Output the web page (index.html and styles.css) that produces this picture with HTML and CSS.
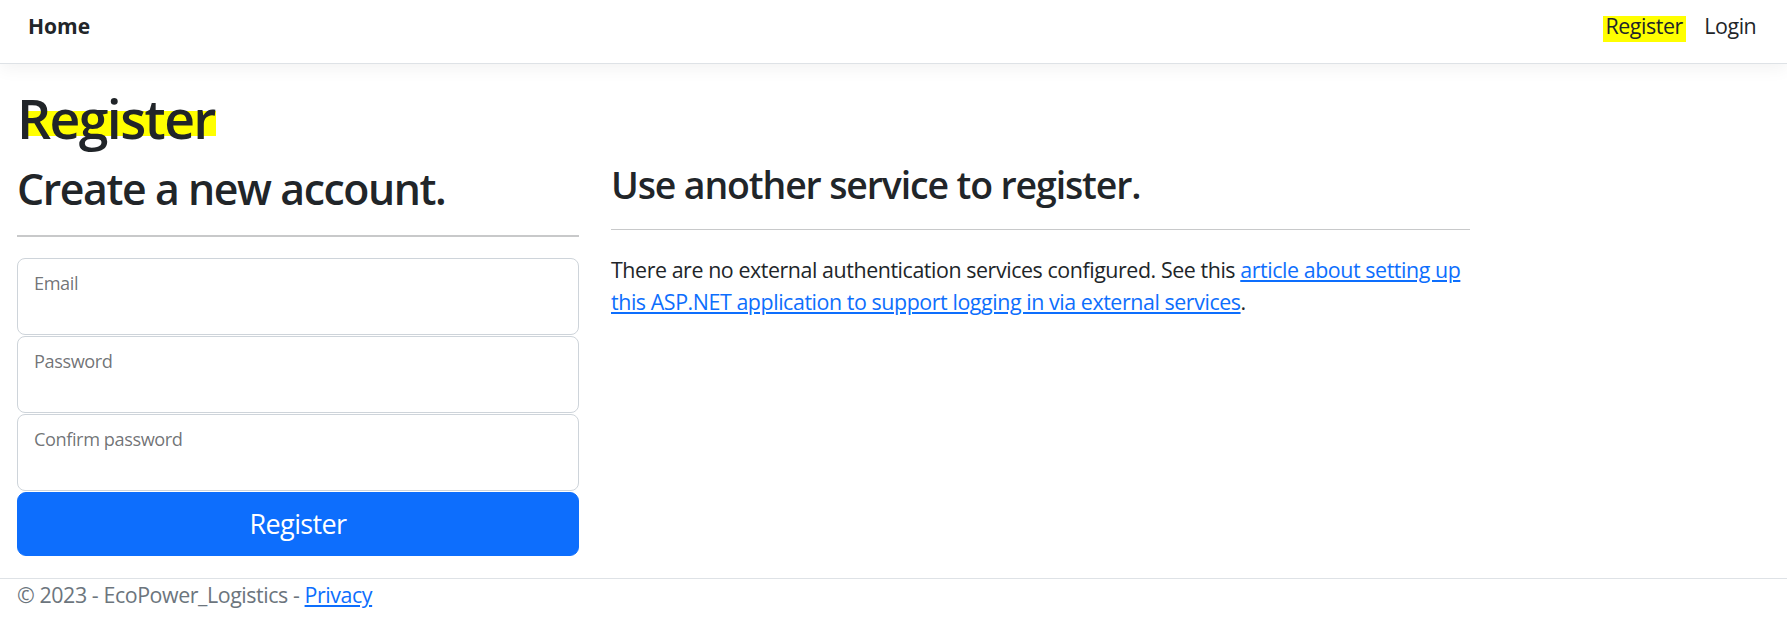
FILE: index.html
```html
<!DOCTYPE html>
<html lang="en">
<head>
<meta charset="utf-8">
<title>Register - EcoPower_Logistics</title>
<link rel="stylesheet" href="styles.css">
</head>
<body>
<header class="topbar">
  <nav class="navbar">
    <a class="brand" href="#">Home</a>
    <ul class="nav-links">
      <li><a class="nav-link" href="#"><span class="hl hl-nav">Register</span></a></li>
      <li><a class="nav-link" href="#">Login</a></li>
    </ul>
  </nav>
</header>
<main class="page">
  <h1 class="title"><span class="hl hl-title">Register</span></h1>
  <div class="row">
    <section class="col-form">
      <h2 class="heading-lg">Create a new account.</h2>
      <hr class="rule rule-thick">
      <form class="reg-form">
        <div class="floating">
          <input class="field" type="email" id="email" autocomplete="username">
          <label class="float-label" for="email">Email</label>
        </div>
        <div class="floating">
          <input class="field" type="password" id="pw" autocomplete="new-password">
          <label class="float-label" for="pw">Password</label>
        </div>
        <div class="floating">
          <input class="field" type="password" id="pw2" autocomplete="new-password">
          <label class="float-label" for="pw2">Confirm password</label>
        </div>
        <button class="btn-primary" type="button">Register</button>
      </form>
    </section>
    <section class="col-ext">
      <h3 class="heading-md">Use another service to register.</h3>
      <hr class="rule">
      <p class="ext-text">There are no external authentication services configured. See this <a class="link" href="#">article about setting up this ASP.NET application to support logging in via external services</a>.</p>
    </section>
  </div>
</main>
<footer class="footer">
  <div class="footer-inner">&copy; 2023 - EcoPower_Logistics - <a class="link" href="#">Privacy</a></div>
</footer>
</body>
</html>
```
FILE: styles.css
```css
* { box-sizing: border-box; }

html, body {
  margin: 0;
  padding: 0;
  background: #fff;
}

body {
  font-family: "Open Sans", "Noto Sans", sans-serif;
  font-size: 21.4px;
  line-height: 1.5;
  letter-spacing: -0.02em;
  color: #212529;
}

/* ---------- navbar ---------- */
.topbar {
  background: #fff;
  border-bottom: 1px solid #dee2e6;
  box-shadow: 0 5px 16px rgba(0, 0, 0, 0.05);
}

.navbar {
  height: 63px;
  display: flex;
  align-items: baseline;
  justify-content: space-between;
  padding: 10px 20px 0 28px;
}

.brand {
  font-size: 21px;
  font-weight: 700;
  letter-spacing: 0;
  color: #212529;
  text-decoration: none;
  line-height: 32px;
}

.nav-links {
  display: flex;
  list-style: none;
  margin: 0;
  padding: 0;
}

.nav-link {
  display: block;
  padding: 0 10.7px;
  color: #212529;
  text-decoration: none;
  line-height: 32px;
}

.hl {
  position: relative;
  isolation: isolate;
}

.hl::before {
  content: "";
  position: absolute;
  background: #ffff00;
  z-index: -1;
}

.hl-nav::before {
  left: -3px;
  right: -3px;
  top: 5px;
  height: 26px;
}

.hl-title::before {
  left: 9px;
  width: 190px;
  top: 29px;
  height: 25px;
}

/* ---------- page ---------- */
.page {
  padding: 0 17px 22px;
}

.title {
  margin: 23px 0 11.5px;
  font-size: 53.5px;
  font-weight: 600;
  letter-spacing: -0.03em;
  line-height: 1.2;
}

.row {
  display: grid;
  grid-template-columns: 562px 859px;
  column-gap: 32px;
  align-items: start;
}

.heading-lg {
  margin: 0;
  font-size: 42.8px;
  font-weight: 600;
  letter-spacing: -0.033em;
  line-height: 1.2;
}

.heading-md {
  margin: 0;
  font-size: 37.45px;
  font-weight: 600;
  letter-spacing: -0.03em;
  line-height: 1.2;
}

.rule {
  border: 0;
  border-top: 1px solid #c8c9ca;
  margin: 21px 0 24px;
  height: 0;
}

.rule-thick {
  border-top-width: 2px;
  margin: 21px 0 21px;
}

/* ---------- form ---------- */
.reg-form {
  display: flex;
  flex-direction: column;
}

.floating {
  position: relative;
  height: 77px;
  margin-bottom: 1px;
}

.field {
  display: block;
  width: 100%;
  height: 100%;
  margin: 0;
  border: 1px solid #ced4da;
  border-radius: 8px;
  background: #fff;
  font: inherit;
  padding: 26px 16px 8px;
}

.float-label {
  position: absolute;
  left: 17px;
  top: 12px;
  font-size: 18.2px;
  line-height: 1.5;
  color: rgba(33, 37, 41, 0.65);
  pointer-events: none;
}

.btn-primary {
  display: block;
  width: 100%;
  height: 64px;
  margin: 0;
  border: 1px solid #0d6efd;
  border-radius: 9px;
  background: #0d6efd;
  color: #fff;
  font-family: inherit;
  font-size: 27px;
  letter-spacing: -0.024em;
  line-height: 1.5;
  padding: 0 21px;
}

/* ---------- external ---------- */
.ext-text {
  margin: 0;
}

.link {
  color: #0d6efd;
  text-decoration: underline;
}

/* ---------- footer ---------- */
.footer {
  border-top: 1px solid #dee2e6;
  color: #6c757d;
}

.footer-inner {
  padding: 0 17px;
  line-height: 32px;
}
```
